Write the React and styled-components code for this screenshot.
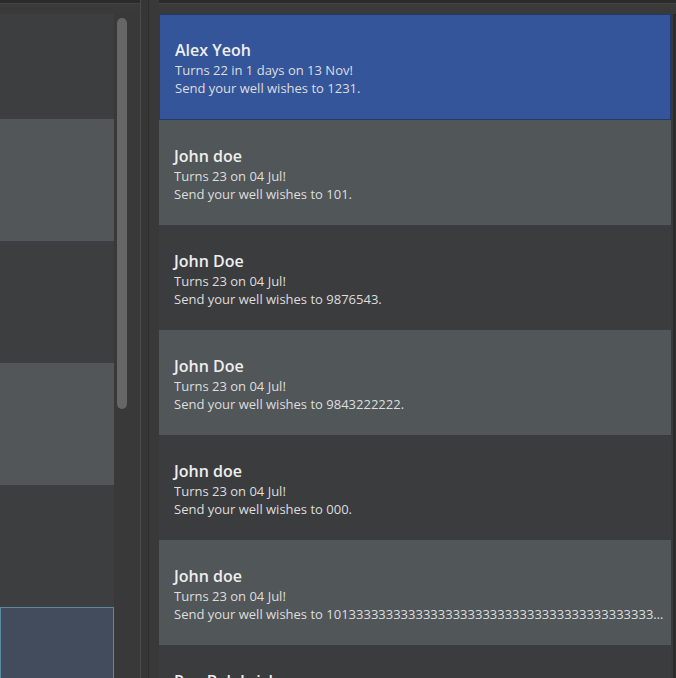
import React from "react";
import styled, { createGlobalStyle } from "styled-components";

const Global = createGlobalStyle`
  html, body { margin: 0; padding: 0; }
  body {
    background: #393939;
    height: 678px;
    overflow: hidden;
    font-family: "Open Sans", "Noto Sans", sans-serif;
  }
`;

const Root = styled.div`
  display: flex;
  height: 678px;
  width: 676px;
  overflow: hidden;
  background: #393939;
`;

const PaneHeader = styled.div`
  height: 14px;
  flex: none;
  box-sizing: border-box;
  border-top: 3px solid #2b2b2b;
  box-shadow: inset 0 1px 0 #454545;
  background: #3a3a3a;
`;

const LeftPane = styled.div`
  width: 140px;
  flex: none;
  display: flex;
  flex-direction: column;
`;

const LeftBody = styled.div`
  flex: 1;
  display: flex;
  overflow: hidden;
`;

const LeftList = styled.div`
  width: 114px;
  display: flex;
  flex-direction: column;
`;

const LeftItem = styled.div`
  flex: none;
  box-sizing: border-box;
  height: ${(p) => p.$h}px;
  background: ${(p) => (p.$selected ? "#424c5d" : p.$alt ? "#525659" : "#3d3e40")};
  border: ${(p) => (p.$selected ? "1px solid #5b8a9c" : "none")};
`;

const ScrollTrack = styled.div`
  width: 26px;
  padding: 4px 0 0 3px;
  box-sizing: border-box;
`;

const ScrollThumb = styled.div`
  width: 10px;
  height: 391px;
  border-radius: 5px;
  background: #666666;
`;

const Splitter = styled.div`
  width: 9px;
  flex: none;
  box-sizing: border-box;
  border-left: 1px solid #4a4a4a;
  border-right: 1px solid #2e2e2e;
  background: #363636;
`;

const RightPane = styled.div`
  flex: 1;
  display: flex;
  flex-direction: column;
  padding-left: 10px;
  min-width: 0;
`;

const RightBody = styled.div`
  flex: 1;
  display: flex;
  overflow: hidden;
`;

const CardList = styled.div`
  width: 512px;
  flex: none;
  display: flex;
  flex-direction: column;
`;

const Card = styled.div`
  flex: none;
  box-sizing: border-box;
  height: ${(p) => (p.$selected ? 106 : 105)}px;
  padding: ${(p) => (p.$selected ? 24 : 25)}px 7px 0 15px;
  background: ${(p) => (p.$selected ? "#34559a" : p.$alt ? "#515659" : "#3b3c3e")};
  border: ${(p) => (p.$selected ? "1px solid #22396b" : "none")};
  overflow: hidden;
`;

const Name = styled.div`
  font-size: 16px;
  font-weight: 600;
  line-height: 22px;
  color: #eeeeee;
  white-space: nowrap;
`;

const Detail = styled.div`
  font-size: 13px;
  line-height: 18px;
  color: #dedede;
  white-space: nowrap;
  overflow: hidden;
  text-overflow: ellipsis;
`;

const RightTrack = styled.div`
  margin-left: 2px;
  width: 3px;
  background: #2c2c2c;
`;

const people = [
  { name: "Alex Yeoh", line: "Turns 22 in 1 days on 13 Nov!", to: "1231", selected: true },
  { name: "John doe", line: "Turns 23 on 04 Jul!", to: "101" },
  { name: "John Doe", line: "Turns 23 on 04 Jul!", to: "9876543" },
  { name: "John Doe", line: "Turns 23 on 04 Jul!", to: "9843222222" },
  { name: "John doe", line: "Turns 23 on 04 Jul!", to: "000" },
  { name: "John doe", line: "Turns 23 on 04 Jul!", to: "1013333333333333333333333333333333333333333333333333333333333" },
  { name: "Roy Balakrishnan", line: "Turns 30 on 01 Jan!", to: "92624417" },
];

const leftItems = [
  { h: 105 },
  { h: 122, alt: true },
  { h: 122 },
  { h: 122, alt: true },
  { h: 122 },
  { h: 122, selected: true },
];

export default function App() {
  return (
    <>
      <Global />
      <Root>
        <LeftPane>
          <PaneHeader />
          <LeftBody>
            <LeftList>
              {leftItems.map((it, i) => (
                <LeftItem key={i} $h={it.h} $alt={it.alt} $selected={it.selected} />
              ))}
            </LeftList>
            <ScrollTrack>
              <ScrollThumb />
            </ScrollTrack>
          </LeftBody>
        </LeftPane>
        <Splitter />
        <RightPane>
          <PaneHeader />
          <RightBody>
            <CardList>
              {people.map((p, i) => (
                <Card key={i} $selected={p.selected} $alt={i % 2 === 1}>
                  <Name>{p.name}</Name>
                  <Detail>{p.line}</Detail>
                  <Detail>Send your well wishes to {p.to}.</Detail>
                </Card>
              ))}
            </CardList>
            <RightTrack />
          </RightBody>
        </RightPane>
      </Root>
    </>
  );
}
